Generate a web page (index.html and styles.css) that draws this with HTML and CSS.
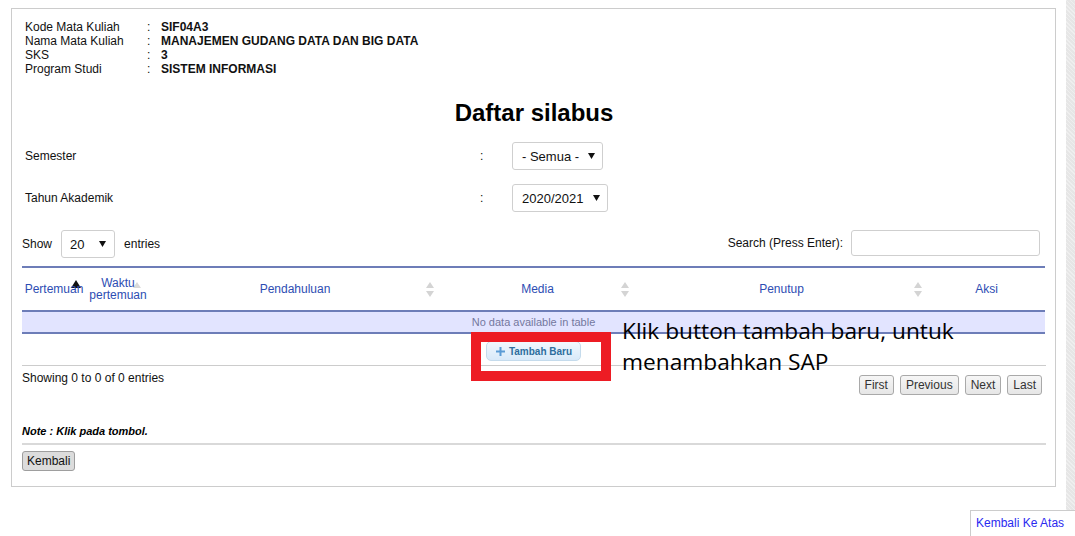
FILE: index.html
```html
<!DOCTYPE html>
<html>
<head>
<meta charset="utf-8">
<title>Daftar silabus</title>
<link rel="stylesheet" href="styles.css">
</head>
<body>
<div class="page">
  <div class="box">
    <div class="info">
      <span class="lbl">Kode Mata Kuliah</span><span class="sep">:</span><span class="val">SIF04A3</span>
      <span class="lbl">Nama Mata Kuliah</span><span class="sep">:</span><span class="val">MANAJEMEN GUDANG DATA DAN BIG DATA</span>
      <span class="lbl">SKS</span><span class="sep">:</span><span class="val">3</span>
      <span class="lbl">Program Studi</span><span class="sep">:</span><span class="val">SISTEM INFORMASI</span>
    </div>

    <h1 class="title">Daftar silabus</h1>

    <div class="filters">
      <div class="frow">
        <span class="flabel">Semester</span><span class="fsep">:</span>
        <div class="sel sel-sem"><span>- Semua -</span><svg class="caret" width="7" height="6" viewBox="0 0 7 6"><path d="M0 0H7L3.5 6Z" fill="#111"/></svg></div>
      </div>
      <div class="frow">
        <span class="flabel">Tahun Akademik</span><span class="fsep">:</span>
        <div class="sel sel-year"><span>2020/2021</span><svg class="caret" width="7" height="6" viewBox="0 0 7 6"><path d="M0 0H7L3.5 6Z" fill="#111"/></svg></div>
      </div>
    </div>

    <div class="toolbar">
      <div class="length">
        <span>Show</span>
        <div class="sel sel-len"><span>20</span><svg class="caret" width="7" height="6" viewBox="0 0 7 6"><path d="M0 0H7L3.5 6Z" fill="#111"/></svg></div>
        <span>entries</span>
      </div>
      <div class="search">
        <span>Search (Press Enter):</span>
        <div class="input"></div>
      </div>
    </div>

    <table class="grid">
      <colgroup>
        <col class="c1"><col class="c2"><col class="c3"><col class="c4"><col class="c5"><col class="c6">
      </colgroup>
      <thead>
        <tr>
          <th class="sortable"><span class="thtext">Pertemuan</span>
            <svg class="sort s1" width="10" height="8" viewBox="0 0 10 8"><path d="M0 8L5 0L10 8Z" fill="#111"/></svg></th>
          <th class="sortable"><span class="thtext">Waktu pertemuan</span>
            <svg class="sort s2" width="8" height="7" viewBox="0 0 8 7"><path d="M0 6L4 0L8 6Z" fill="#d9d9d9"/></svg></th>
          <th class="sortable"><span class="thtext">Pendahuluan</span>
            <svg class="sort sb" width="8" height="15" viewBox="0 0 8 15"><path d="M0 6L4 0L8 6Z M0 9L4 15L8 9Z" fill="#d4d4d4"/></svg></th>
          <th class="sortable"><span class="thtext">Media</span>
            <svg class="sort sb" width="8" height="15" viewBox="0 0 8 15"><path d="M0 6L4 0L8 6Z M0 9L4 15L8 9Z" fill="#d4d4d4"/></svg></th>
          <th class="sortable"><span class="thtext">Penutup</span>
            <svg class="sort sb" width="8" height="15" viewBox="0 0 8 15"><path d="M0 6L4 0L8 6Z M0 9L4 15L8 9Z" fill="#d4d4d4"/></svg></th>
          <th><span class="thtext">Aksi</span></th>
        </tr>
      </thead>
      <tbody>
        <tr><td colspan="6" class="empty">No data available in table</td></tr>
      </tbody>
    </table>

    <div class="add">
      <button class="btn-add"><svg width="9" height="9" viewBox="0 0 9 9"><path d="M3.5 0H5.5V3.5H9V5.5H5.5V9H3.5V5.5H0V3.5H3.5Z" fill="#5b9bd5"/></svg><span>Tambah Baru</span></button>
    </div>

    <div class="foot">
      <div class="showing">Showing 0 to 0 of 0 entries</div>
      <div class="pager">
        <button class="pbtn">First</button>
        <button class="pbtn">Previous</button>
        <button class="pbtn">Next</button>
        <button class="pbtn">Last</button>
      </div>
    </div>

    <p class="note">Note : Klik pada tombol.</p>
    <div class="rule"></div>
    <button class="btn-back">Kembali</button>

    <div class="callout-box"></div>
    <div class="callout-text">Klik button tambah baru, untuk<br>menambahkan SAP</div>
  </div>
</div>
<div class="strip"></div>
<a class="totop" href="#">Kembali Ke Atas</a>
</body>
</html>
```
FILE: styles.css
```css
* { box-sizing: border-box; }
html, body { margin: 0; padding: 0; background: #fff; }
body {
  font-family: "Liberation Sans", Arial, sans-serif;
  font-size: 12px;
  color: #111;
  width: 1075px;
  height: 536px;
  overflow: hidden;
}
.page { padding: 8px 0 0 11px; }
.box {
  position: relative;
  width: 1045px;
  border: 1px solid #cccccc;
  padding: 11px 9px 15px 10px;
}

/* course info */
.info {
  display: grid;
  grid-template-columns: 122px 14px auto;
  margin-left: 3px;
  line-height: 14px;
  font-size: 12px;
}
.info .val { font-weight: bold; }

.title {
  margin: 23px 0 0 0;
  font-size: 24px;
  line-height: 28px;
  font-weight: bold;
  text-align: center;
  color: #000;
}

/* filters */
.filters {
  margin-top: 15px;
  display: flex;
  flex-direction: column;
  gap: 14px;
}
.frow { display: flex; align-items: center; height: 28px; }
.flabel { width: 455px; margin-left: 3px; }
.fsep { width: 32px; }

.sel {
  display: inline-flex;
  align-items: center;
  justify-content: space-between;
  height: 28px;
  border: 1px solid #cfcfcf;
  border-radius: 3px;
  background: #fff;
  font-size: 13px;
  color: #111;
}
.sel-sem { width: 91px; padding: 0 7px 0 9px; }
.sel-year { width: 96px; padding: 0 7px 0 9px; }
.sel-len { width: 54px; padding: 0 8px 0 8px; }

/* toolbar */
.toolbar {
  margin-top: 18px;
  display: flex;
  justify-content: space-between;
  align-items: flex-start;
}
.length { display: flex; align-items: center; gap: 9px; height: 28px; }
.search { display: flex; align-items: center; gap: 8px; height: 26px; margin-right: 6px; }
.input {
  width: 189px;
  height: 26px;
  border: 1px solid #cfcfcf;
  border-radius: 3px;
  background: #fff;
}

/* table */
.grid {
  margin-top: 8px;
  width: 1023px;
  border-collapse: collapse;
  table-layout: fixed;
}
.c1 { width: 64px; }
.c2 { width: 64px; }
.c3 { width: 290px; }
.c4 { width: 195px; }
.c5 { width: 293px; }
.c6 { width: 117px; }
.grid thead tr { border-top: 2px solid #6d7db8; border-bottom: 2px solid #6d7db8; }
.grid th {
  position: relative;
  height: 44px;
  padding: 0 2px;
  font-weight: normal;
  font-size: 12px;
  line-height: 12px;
  color: #2d4db3;
  text-align: center;
  vertical-align: middle;
}
.thtext { position: relative; z-index: 1; }
.sort { position: absolute; top: 50%; }
.s1 { right: 5px; margin-top: -9px; }
.s2 { right: 9px; margin-top: -7px; }
.sb { right: 6px; margin-top: -7px; }
.grid tbody tr { border-bottom: 2px solid #6d7db8; }
.empty {
  height: 20px;
  padding: 0;
  background: #e2e4ff;
  text-align: center;
  font-size: 11px;
  line-height: 20px;
  color: #74789e;
}

/* add button */
.add { margin-top: 7px; text-align: center; padding-right: 1px; }
.btn-add {
  display: inline-flex;
  align-items: center;
  gap: 4px;
  height: 20px;
  padding: 0 8px 0 9px;
  border: 1px solid #c5dbec;
  border-radius: 5px;
  background: linear-gradient(#f2f8fe, #d8e9f9);
  font-family: "Liberation Sans", Arial, sans-serif;
  font-size: 10px;
  font-weight: bold;
  color: #2e6e9e;
}

/* footer */
.foot {
  margin-top: 4px;
  border-top: 1px solid #cccccc;
  display: flex;
  justify-content: space-between;
  align-items: flex-start;
  padding-top: 5px;
}
.showing { line-height: 14px; }
.pager { display: flex; gap: 6px; margin-top: 4px; margin-right: 4px; }
.pbtn {
  height: 20px;
  padding: 0 5px;
  border: 1px solid #a9a9a9;
  border-radius: 3px;
  background: linear-gradient(#f6f6f6, #e6e6e6);
  font-family: "Liberation Sans", Arial, sans-serif;
  font-size: 12px;
  color: #333;
}

.note {
  margin: 29px 0 0 0;
  font-size: 11px;
  line-height: 14px;
  font-weight: bold;
  font-style: italic;
  color: #000;
}
.rule { margin-top: 5px; height: 2px; background: #d9d9d9; }
.btn-back {
  display: block;
  margin-top: 6px;
  height: 20px;
  padding: 0 4px;
  border: 1px solid #9e9e9e;
  border-radius: 3px;
  background: #dcdcdc;
  font-family: "Liberation Sans", Arial, sans-serif;
  font-size: 12px;
  color: #111;
}

/* annotation overlay */
.callout-box {
  position: absolute;
  left: 459px;
  top: 323px;
  width: 140px;
  height: 49px;
  border: 10px solid #ed1c24;
}
.callout-text {
  position: absolute;
  left: 610px;
  top: 306px;
  font-family: "Open Sans", "Noto Sans", sans-serif;
  font-size: 22.7px;
  line-height: 31px;
  color: #000;
  white-space: nowrap;
}

/* right strip and back-to-top */
.strip {
  position: fixed;
  top: 0;
  right: 0;
  width: 9px;
  height: 510px;
  background-color: #e6e6e6;
  background-image: repeating-linear-gradient(45deg, rgba(255,255,255,0.35) 0 1px, transparent 1px 3px);
}
.totop {
  position: fixed;
  left: 970px;
  top: 510px;
  width: 105px;
  height: 26px;
  border-top: 1px solid #cccccc;
  border-left: 1px solid #cccccc;
  background: #fff;
  padding: 5px 0 0 5px;
  font-size: 12px;
  line-height: 14px;
  color: #2a2af0;
  text-decoration: none;
}
```
